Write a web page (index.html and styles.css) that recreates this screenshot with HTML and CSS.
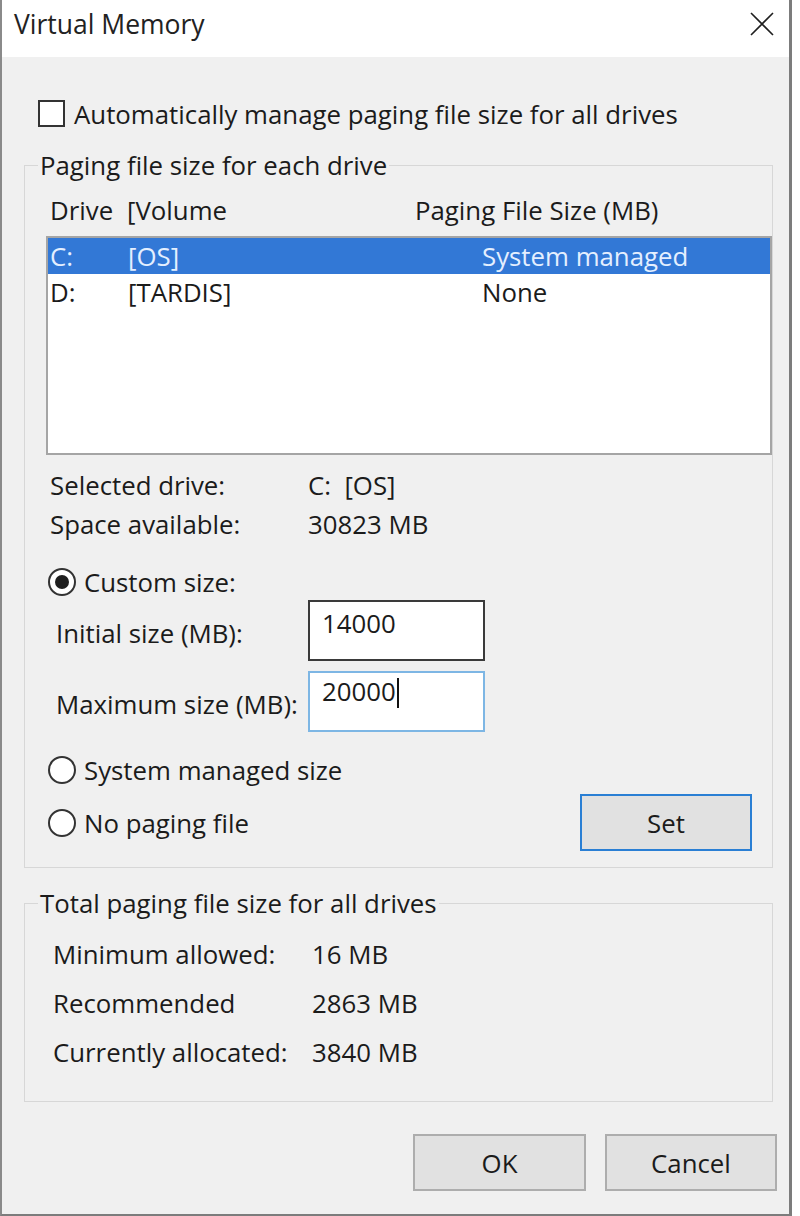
FILE: index.html
```html
<!DOCTYPE html>
<html lang="en">
<head>
<meta charset="utf-8">
<title>Virtual Memory</title>
<link rel="stylesheet" href="styles.css">
</head>
<body>
<div class="window">
  <div class="titlebar">
    <span class="title">Virtual Memory</span>
    <svg class="close" width="24" height="24" viewBox="0 0 24 24" aria-hidden="true">
      <path d="M1 1 L23 23 M23 1 L1 23" stroke="#1f1f1f" stroke-width="1.6" fill="none"/>
    </svg>
  </div>
  <div class="content">
    <div class="check-row">
      <span class="checkbox"></span>
      <span class="check-label">Automatically manage paging file size for all drives</span>
    </div>

    <fieldset class="group group-drives">
      <legend>Paging file size for each drive</legend>
      <div class="list-head">
        <span>Drive</span><span>[Volume</span><span>Paging File Size (MB)</span>
      </div>
      <div class="listbox">
        <div class="row selected"><span>C:</span><span>[OS]</span><span>System managed</span></div>
        <div class="row"><span>D:</span><span>[TARDIS]</span><span>None</span></div>
      </div>
      <div class="info">
        <div class="info-row"><span>Selected drive:</span><span>C:&nbsp; [OS]</span></div>
        <div class="info-row"><span>Space available:</span><span>30823 MB</span></div>
      </div>
      <div class="radio-row custom">
        <span class="radio checked"></span><span>Custom size:</span>
      </div>
      <div class="field-row first">
        <span class="field-label">Initial size (MB):</span>
        <div class="textbox">14000</div>
      </div>
      <div class="field-row second">
        <span class="field-label">Maximum size (MB):</span>
        <div class="textbox focused">20000<span class="caret"></span></div>
      </div>
      <div class="radio-row system">
        <span class="radio"></span><span>System managed size</span>
      </div>
      <div class="set-row">
        <div class="radio-row nopage">
          <span class="radio"></span><span>No paging file</span>
        </div>
        <button class="btn btn-set">Set</button>
      </div>
    </fieldset>

    <fieldset class="group group-total">
      <legend>Total paging file size for all drives</legend>
      <div class="total-row"><span>Minimum allowed:</span><span>16 MB</span></div>
      <div class="total-row"><span>Recommended</span><span>2863 MB</span></div>
      <div class="total-row"><span>Currently allocated:</span><span>3840 MB</span></div>
    </fieldset>

    <div class="buttons">
      <button class="btn btn-ok">OK</button>
      <button class="btn btn-cancel">Cancel</button>
    </div>
  </div>
</div>
</body>
</html>
```

FILE: styles.css
```css
* { box-sizing: border-box; }

html, body {
  margin: 0;
  padding: 0;
  background: #ffffff;
}

body {
  font-family: "Open Sans", "Noto Sans", "Liberation Sans", sans-serif;
  font-size: 25.8px;
  letter-spacing: 0;
  color: #1b1b1b;
}

.window {
  width: 792px;
  height: 1216px;
  border-left: 2px solid #8a8a8a;
  border-right: 3px solid #7c7c7c;
  border-bottom: 2px solid #7c7c7c;
  display: flex;
  flex-direction: column;
}

.titlebar {
  height: 57px;
  background: #ffffff;
  display: flex;
  align-items: center;
  padding-left: 12px;
  padding-right: 15px;
}

.title {
  font-size: 26.5px;
  color: #222;
  margin-top: -9px;
}

.close {
  margin-left: auto;
  margin-top: -10px;
}

.content {
  flex: 1;
  background: #f0f0f0;
  padding-top: 43px;
}

/* checkbox */
.check-row {
  display: flex;
  align-items: center;
  height: 27px;
  margin-left: 36px;
}

.checkbox {
  width: 27px;
  height: 27px;
  border: 2px solid #333;
  background: #fff;
  flex: none;
}

.check-label {
  margin-left: 9px;
}

/* group boxes */
.group {
  margin: 0 0 0 22px;
  width: 749px;
  border: 1px solid #d7d7d7;
  padding: 0;
  min-width: 0;
}

.group legend {
  margin-left: 13px;
  padding: 0 2px;
  line-height: 30px;
  height: 30px;
}

.group-drives {
  margin-top: 23px;
  height: 718px;
}

.list-head {
  margin-top: 15px;
  height: 30px;
  line-height: 30px;
  display: grid;
  grid-template-columns: 77px 288px 1fr;
  padding-left: 25px;
}

.listbox {
  margin-top: 11px;
  margin-left: 21px;
  width: 726px;
  height: 219px;
  background: #fff;
  border: 2px solid #a5a5a5;
}

.row {
  height: 36px;
  line-height: 36px;
  display: grid;
  grid-template-columns: 78px 354px 1fr;
  padding-left: 2px;
  color: #1b1b1b;
}

.row.selected {
  background: #3278d6;
  color: #e4efff;
}

.info {
  margin-top: 11px;
}

.info-row {
  height: 39px;
  line-height: 39px;
  display: grid;
  grid-template-columns: 258px 1fr;
  padding-left: 25px;
}

/* radios */
.radio-row {
  display: flex;
  align-items: center;
  height: 36px;
  padding-left: 23px;
}

.radio {
  width: 28px;
  height: 28px;
  border-radius: 50%;
  border: 2px solid #333;
  background: #fff;
  margin-right: 8px;
  flex: none;
  display: flex;
  align-items: center;
  justify-content: center;
}

.radio.checked::after {
  content: "";
  width: 14px;
  height: 14px;
  border-radius: 50%;
  background: #1e1e1e;
}

.radio-row.custom {
  margin-top: 20px;
}

/* size fields */
.field-row {
  display: grid;
  grid-template-columns: 252px 177px;
  align-items: center;
  padding-left: 31px;
  height: 61px;
}

.field-row.second {
  margin-top: 10px;
}

.field-label {
  margin-top: 4px;
}

.textbox {
  height: 61px;
  background: #fff;
  border: 2px solid #3a3a3a;
  padding: 4px 0 0 12px;
  line-height: 34px;
  display: flex;
  align-items: flex-start;
  align-self: start;
}

.textbox.focused {
  border-color: #7db6e4;
  padding-top: 1px;
}

.caret {
  width: 2px;
  height: 30px;
  background: #111;
  margin-left: 1px;
  margin-top: 4px;
}

.radio-row.system {
  margin-top: 20px;
}

.set-row {
  display: flex;
  align-items: center;
  margin-top: 6px;
  height: 57px;
}

/* buttons */
.btn {
  font-family: inherit;
  font-size: 25.8px;
  color: #1b1b1b;
  background: #e1e1e1;
  border: 2px solid #adadad;
  height: 57px;
  padding: 0;
  margin: 0;
}

.btn-set {
  margin-left: auto;
  margin-right: 20px;
  width: 172px;
  border: 2px solid #2a7fd4;
}

.group-total {
  margin-top: 20px;
  height: 214px;
}

.total-row {
  height: 49px;
  line-height: 49px;
  display: grid;
  grid-template-columns: 259px 1fr;
  padding-left: 28px;
}

.group-total .total-row:first-of-type {
  margin-top: 12px;
}

.buttons {
  display: flex;
  justify-content: flex-end;
  gap: 19px;
  margin-top: 32px;
  padding-right: 12px;
}

.btn-ok { width: 173px; }
.btn-cancel { width: 172px; }
```
